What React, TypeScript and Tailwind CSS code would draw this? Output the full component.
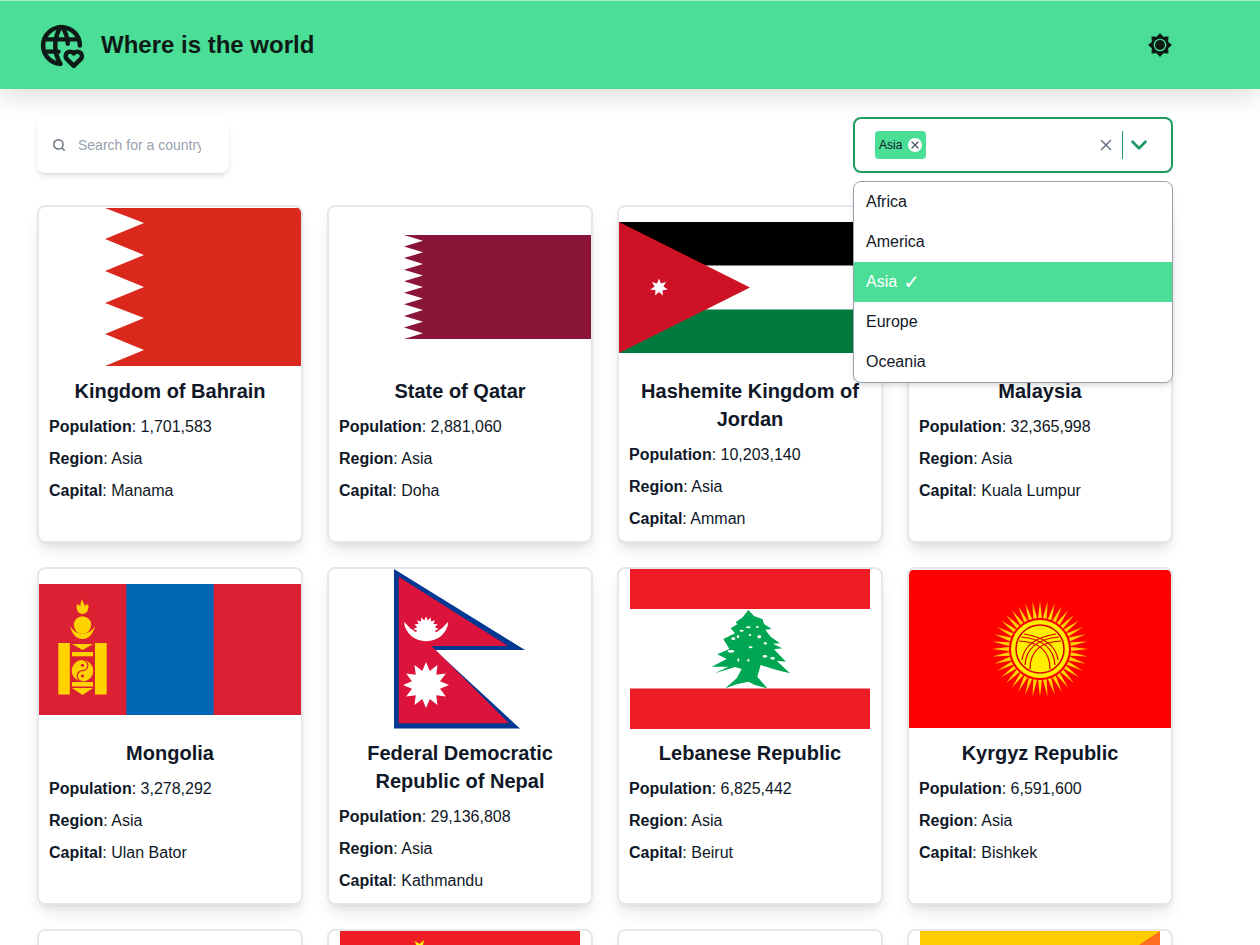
import React from "react";
import { TbWorldHeart } from "react-icons/tb";
import { Search, X, ChevronDown } from "lucide-react";

function star(cx: number, cy: number, R: number, r: number, n: number, rot = -90) {
  const pts: string[] = [];
  for (let i = 0; i < n * 2; i++) {
    const a = ((rot + (i * 180) / n) * Math.PI) / 180;
    const d = i % 2 === 0 ? R : r;
    pts.push(`${(cx + d * Math.cos(a)).toFixed(2)},${(cy + d * Math.sin(a)).toFixed(2)}`);
  }
  return pts.join(" ");
}

function Flag({ children }: { children?: React.ReactNode }) {
  return (
    <svg viewBox="0 0 262 160" className="block h-40 w-full shrink-0">
      {children}
    </svg>
  );
}

const Sun = () => (
  <svg viewBox="0 0 24 24" className="h-6 w-6">
    <polygon points={star(12, 12, 12, 8.8, 8)} fill="#0e1a15" />
    <circle cx="12" cy="12" r="6.3" fill="#4ade97" />
    <circle cx="12" cy="12" r="5" fill="#0e1a15" />
  </svg>
);

const Bahrain = () => (
  <Flag>
    <polygon fill="#da291c" points="66,1 105,16 66,32 105,48 66,64 105,80 66,96 105,111 66,127 105,143 66,159 262,159 262,1" />
  </Flag>
);

const Qatar = () => {
  const pts: string[] = ["262,28", "75,28"];
  const h = 104 / 9;
  for (let i = 0; i < 9; i++) {
    pts.push(`94,${28 + h * (i + 0.5)}`);
    pts.push(`75,${28 + h * (i + 1)}`);
  }
  pts.push("262,132");
  return (
    <Flag>
      <polygon fill="#8a1538" points={pts.join(" ")} />
    </Flag>
  );
};

const Jordan = () => (
  <Flag>
    <rect x="0" y="15" width="262" height="43.5" fill="#000" />
    <rect x="0" y="102.5" width="262" height="43.5" fill="#007a3d" />
    <polygon points="0,15 131,80.5 0,146" fill="#ce1126" />
    <polygon points={star(40, 80.5, 9, 4.5, 7)} fill="#fff" />
  </Flag>
);

const Mongolia = () => (
  <Flag>
    <rect x="0" y="15" width="262" height="131" fill="#da2032" />
    <rect x="87.3" y="15" width="87.4" height="131" fill="#0066b3" />
    <g fill="#ffd200">
      <path d="M43.5 28 C42 32 46 34 45.5 37 C47.5 35.5 49.5 34.5 49.5 37.5 C49.5 42 47 45 43.5 45 C40 45 37.5 42 37.5 37.5 C37.5 34.5 39.5 35.5 41.5 37 C41 33 43 32 43.5 28 Z" />
      <circle cx="43.5" cy="56" r="8.7" />
      <path d="M31 57 C33 66 38 70 43.5 70 C49 70 54 66 56 57 C53 62 49 64.5 43.5 64.5 C38 64.5 34 62 31 57 Z" />
      <rect x="19.3" y="74" width="11.5" height="51.5" />
      <rect x="56" y="74" width="11.7" height="51.5" />
      <polygon points="33,75 54,75 43.5,81" />
      <rect x="33" y="83" width="21" height="4.3" />
      <circle cx="43.5" cy="101.7" r="10.7" />
      <rect x="33" y="113" width="21" height="4.5" />
      <polygon points="33,119 54,119 43.5,126" />
    </g>
    <path d="M43.5 91 A5.3 5.3 0 0 1 43.5 101.7 A5.3 5.3 0 0 0 43.5 112.4" fill="none" stroke="#da2032" strokeWidth="1.2" />
    <circle cx="43.5" cy="96.3" r="1.6" fill="#da2032" />
    <circle cx="43.5" cy="107" r="1.6" fill="#da2032" />
  </Flag>
);

const Nepal = () => (
  <Flag>
    <polygon points="65,0 196,81 106,81 191,159.5 65,159.5" fill="#003893" />
    <polygon points="69.7,7.7 179,77 102.7,77 180,154.3 69.7,154.3" fill="#dc143c" />
    <path d="M75 52.7 A22.2 21 0 0 0 119.3 52.7 Q97 79 75 52.7 Z" fill="#fff" />
    <polygon points={star(97, 60, 12.5, 9, 16)} fill="#fff" />
    <polygon points={star(97, 116, 23, 14.5, 12)} fill="#fff" />
  </Flag>
);

const Lebanon = () => (
  <Flag>
    <rect x="11" y="0" width="240" height="40" fill="#ee1c25" />
    <rect x="11" y="119.5" width="240" height="40.5" fill="#ee1c25" />
    <g transform="translate(1 -4) scale(0.3333)">
      <polygon
        fill="#00a651"
        points="385,135 402,153 428,163 432,177 455,192 436,194 452,215 480,235 458,236 487,250 462,253 498,290 470,287 510,325 470,315 422,300 412,335 442,370 405,360 385,350 350,358 316,370 350,340 365,312 345,306 285,325 325,305 275,305 320,282 292,268 328,252 310,222 345,205 332,190 352,178 347,172 368,157"
      />
      <g fill="#fff">
        <ellipse cx="340" cy="221" rx="6" ry="4" />
        <ellipse cx="365" cy="197" rx="6" ry="3" />
        <ellipse cx="385" cy="187" rx="7" ry="3" />
        <ellipse cx="412" cy="186" rx="4" ry="3" />
        <ellipse cx="418" cy="215" rx="6" ry="5" />
        <ellipse cx="390" cy="210" rx="4" ry="3" />
        <ellipse cx="354" cy="215" rx="4" ry="4" />
        <ellipse cx="436" cy="235" rx="4" ry="4" />
        <ellipse cx="333" cy="259" rx="10" ry="4" />
        <ellipse cx="392" cy="247" rx="6" ry="3" />
        <ellipse cx="435" cy="274" rx="7" ry="4" />
        <ellipse cx="458" cy="280" rx="7" ry="4" />
        <ellipse cx="355" cy="285" rx="3" ry="5" />
        <ellipse cx="385" cy="286" rx="3" ry="4" />
      </g>
    </g>
  </Flag>
);

const Kyrgyz = () => {
  const rays = Array.from({ length: 40 }, (_, i) => i * 9);
  const cx = 131;
  const cy = 80;
  return (
    <Flag>
      <rect x="0" y="1" width="262" height="158" fill="#f00" />
      <g fill="#ffd000">
        {rays.map((a) => (
          <polygon key={a} transform={`rotate(${a} ${cx} ${cy})`} points={`${cx - 1.9},${cy - 31} ${cx + 1.9},${cy - 31} ${cx},${cy - 48}`} />
        ))}
      </g>
      <circle cx={cx} cy={cy} r="29" fill="#ffee00" />
      <circle cx={cx} cy={cy} r="24" fill="#ffee00" stroke="#d80000" strokeWidth="1.6" />
      <g fill="none" stroke="#d80000" strokeWidth="1.2">
        <path d="M113 91 C115 76 128 68 147 65" />
        <path d="M116 96 C117 80 128 70 150 68" />
        <path d="M121 100 C121 84 130 73 152 72" />
        <path d="M149 91 C147 76 134 68 115 65" />
        <path d="M146 96 C145 80 134 70 112 68" />
        <path d="M141 100 C141 84 132 73 110 72" />
      </g>
      <path d="M124 102 C124 92 127 84 131 84 C135 84 138 92 138 102 Z" fill="#ffee00" />
    </Flag>
  );
};

const China = () => (
  <Flag>
    <rect x="11" y="0" width="240" height="160" fill="#ee1c25" />
    <polygon points={star(51, 40, 24, 9.2, 5)} fill="#ffff00" />
    <polygon points={star(91, 16, 8, 3.1, 5, -60)} fill="#ffff00" />
    <polygon points={star(107, 32, 8, 3.1, 5, -70)} fill="#ffff00" />
  </Flag>
);

const Bhutan = () => (
  <Flag>
    <rect x="11" y="0" width="240" height="160" fill="#ffcc00" />
    <polygon points="251,0 251,160 11,160" fill="#ff6d21" />
  </Flag>
);

type CountryData = {
  flag: React.ReactNode;
  name: string;
  population: string;
  capital: string;
};

const countries: CountryData[] = [
  { flag: <Bahrain />, name: "Kingdom of Bahrain", population: "1,701,583", capital: "Manama" },
  { flag: <Qatar />, name: "State of Qatar", population: "2,881,060", capital: "Doha" },
  { flag: <Jordan />, name: "Hashemite Kingdom of Jordan", population: "10,203,140", capital: "Amman" },
  { flag: <Flag />, name: "Malaysia", population: "32,365,998", capital: "Kuala Lumpur" },
  { flag: <Mongolia />, name: "Mongolia", population: "3,278,292", capital: "Ulan Bator" },
  { flag: <Nepal />, name: "Federal Democratic Republic of Nepal", population: "29,136,808", capital: "Kathmandu" },
  { flag: <Lebanon />, name: "Lebanese Republic", population: "6,825,442", capital: "Beirut" },
  { flag: <Kyrgyz />, name: "Kyrgyz Republic", population: "6,591,600", capital: "Bishkek" },
];

function Card({ c }: { c: CountryData }) {
  return (
    <div className="flex flex-col overflow-hidden rounded-lg border-2 border-gray-200 bg-white pb-2.5 shadow-lg">
      {c.flag}
      <div className="px-2.5 pt-2.5">
        <h2 className="text-center text-xl leading-7 font-bold text-gray-900">{c.name}</h2>
        <div className="mt-2.5 flex flex-col gap-2 text-base leading-6 text-gray-900">
          <p><b>Population</b>: {c.population}</p>
          <p><b>Region</b>: Asia</p>
          <p><b>Capital</b>: {c.capital}</p>
        </div>
      </div>
    </div>
  );
}

function FlagOnly({ flag }: { flag?: React.ReactNode }) {
  return (
    <div className="overflow-hidden rounded-lg border-2 border-gray-200 bg-white shadow-lg">
      {flag ?? <Flag />}
    </div>
  );
}

export default function App() {
  return (
    <div className="h-[945px] overflow-hidden bg-white font-['Liberation_Sans',Arial,sans-serif]">
      <header className="flex h-[89px] items-center justify-between border-t border-[#a3e9c6] bg-[#4ade97] pr-[88px] pl-[37px] shadow-[0_8px_24px_rgba(0,0,0,0.13)]">
        <div className="flex items-center gap-[15px]">
          <TbWorldHeart className="h-[49px] w-[49px] text-[#0e1a15]" strokeWidth={2.2} />
          <h1 className="text-2xl font-bold text-[#0e1a15]">Where is the world</h1>
        </div>
        <Sun />
      </header>

      <main className="w-[1173px] pt-7 pl-[37px]">
        <div className="flex items-center justify-between">
          <label className="flex h-[55px] w-[192px] items-center rounded-lg bg-white pr-7 pl-[15px] shadow-md">
            <Search className="h-3.5 w-3.5 shrink-0 text-gray-500" strokeWidth={2.5} />
            <input
              className="ml-3 w-full min-w-0 bg-transparent text-sm text-gray-900 outline-none placeholder:text-gray-400"
              placeholder="Search for a country"
            />
          </label>

          <div className="relative w-[320px]">
            <div className="flex h-14 items-center rounded-lg border-2 border-[#1f9a62] bg-white pr-[19px] pl-5">
              <span className="flex h-7 items-center gap-1.5 rounded bg-[#4ade97] px-1 text-xs text-gray-900">
                Asia
                <span className="flex h-3.5 w-3.5 items-center justify-center rounded-full bg-white">
                  <X className="h-3 w-3 text-gray-600" strokeWidth={2.5} />
                </span>
              </span>
              <X className="mr-[7px] ml-auto h-[18px] w-[18px] text-gray-500" strokeWidth={2} />
              <span className="h-7 w-px bg-[#1f9a62]" />
              <ChevronDown className="ml-[3px] h-[26px] w-[26px] text-[#1f9a62]" strokeWidth={2.5} />
            </div>
            <ul className="absolute top-16 right-0 left-0 z-10 overflow-hidden rounded-lg border border-gray-400 bg-white text-base text-gray-900 shadow-md">
              <li className="flex h-10 items-center px-3">Africa</li>
              <li className="flex h-10 items-center px-3">America</li>
              <li className="flex h-10 items-center bg-[#4ade97] px-3 text-white">Asia<span className="ml-[6px] font-['DejaVu_Sans'] text-xl font-bold">✓</span></li>
              <li className="flex h-10 items-center px-3">Europe</li>
              <li className="flex h-10 items-center px-3">Oceania</li>
            </ul>
          </div>
        </div>

        <div className="mt-8 grid grid-cols-4 gap-6">
          {countries.map((c) => (
            <Card key={c.name} c={c} />
          ))}
          <FlagOnly />
          <FlagOnly flag={<China />} />
          <FlagOnly />
          <FlagOnly flag={<Bhutan />} />
        </div>
      </main>
    </div>
  );
}
